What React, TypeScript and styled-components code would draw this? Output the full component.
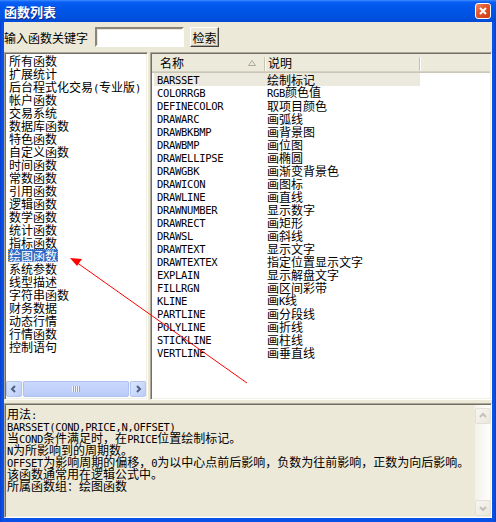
import React from 'react';
import styled, { createGlobalStyle } from 'styled-components';

const CJK = `"Noto Sans CJK SC", "Liberation Sans", sans-serif`;
const MONO = `"DejaVu Sans Mono", "Liberation Mono", monospace`;

const GlobalStyle = createGlobalStyle`
  html, body {
    margin: 0;
    padding: 0;
  }
  body {
    width: 496px;
    height: 522px;
    overflow: hidden;
    font-family: ${CJK};
    font-size: 12px;
    color: #000;
  }
`;

const groups = [
    '所有函数', '扩展统计', '后台程式化交易(专业版)', '帐户函数', '交易系统',
    '数据库函数', '特色函数', '自定义函数', '时间函数', '常数函数', '引用函数',
    '逻辑函数', '数学函数', '统计函数', '指标函数', '绘图函数', '系统参数',
    '线型描述', '字符串函数', '财务数据', '动态行情', '行情函数', '控制语句',
];

const funcs: [string, string][] = [
    ['BARSSET', '绘制标记'],
    ['COLORRGB', 'RGB颜色值'],
    ['DEFINECOLOR', '取项目颜色'],
    ['DRAWARC', '画弧线'],
    ['DRAWBKBMP', '画背景图'],
    ['DRAWBMP', '画位图'],
    ['DRAWELLIPSE', '画椭圆'],
    ['DRAWGBK', '画渐变背景色'],
    ['DRAWICON', '画图标'],
    ['DRAWLINE', '画直线'],
    ['DRAWNUMBER', '显示数字'],
    ['DRAWRECT', '画矩形'],
    ['DRAWSL', '画斜线'],
    ['DRAWTEXT', '显示文字'],
    ['DRAWTEXTEX', '指定位置显示文字'],
    ['EXPLAIN', '显示解盘文字'],
    ['FILLRGN', '画区间彩带'],
    ['KLINE', '画K线'],
    ['PARTLINE', '画分段线'],
    ['POLYLINE', '画折线'],
    ['STICKLINE', '画柱线'],
    ['VERTLINE', '画垂直线'],
];

const usage = [
    '用法:',
    'BARSSET(COND,PRICE,N,OFFSET)',
    '当COND条件满足时，在PRICE位置绘制标记。',
    'N为所影响到的周期数。',
    'OFFSET为影响周期的偏移，0为以中心点前后影响，负数为往前影响，正数为向后影响。',
    '该函数通常用在逻辑公式中。',
    '所属函数组：绘图函数',
];

const Window = styled.div`
    position: relative;
    width: 496px;
    height: 522px;
    display: flex;
    flex-direction: column;
    background: linear-gradient(90deg, #0a3fd0 0, #0850e6 2px, #0850e6 494px, #0a3fd0 496px);
`;

const TitleBar = styled.div`
    height: 22px;
    flex: none;
    display: flex;
    align-items: center;
    justify-content: space-between;
    padding: 0 5px 0 4px;
    background: linear-gradient(#3d8dff 0, #0a5ef4 2px, #0057ea 7px, #0053e2 16px, #0049d4 22px);
    color: #fff;
    font-weight: bold;
    font-size: 13px;
    text-shadow: 1px 1px #0b2a8c;
`;

const CloseButton = styled.div`
    width: 14px;
    height: 14px;
    border: 1px solid #fff;
    border-radius: 3px;
    background: linear-gradient(135deg, #f08a68 0, #e2572f 40%, #c83a14 100%);
    display: flex;
    align-items: center;
    justify-content: center;
`;

const Client = styled.div`
    flex: 1;
    margin: 0 4px 4px;
    background: #ece9d8;
    display: flex;
    flex-direction: column;
`;

const SearchRow = styled.div`
    height: 20px;
    margin: 5px 0;
    display: flex;
    align-items: center;
`;

const SearchLabel = styled.span`
    width: 91px;
    line-height: 13px;
`;

const SearchInput = styled.div`
    width: 85px;
    height: 16px;
    background: #fff;
    border: 2px solid;
    border-color: #8a877a #fff #fff #8a877a;
    box-shadow: inset 1px 1px #ece9d8;
`;

const SearchButton = styled.div`
    margin-left: 6px;
    width: 27px;
    height: 18px;
    border: 1px solid;
    border-color: #fff #404040 #404040 #fff;
    box-shadow: inset -1px -1px #aca899;
    display: flex;
    align-items: center;
    justify-content: center;
    line-height: 13px;
`;

const Panes = styled.div`
    height: 348px;
    display: flex;
    gap: 2px;
`;

const Sunken = styled.div`
    box-sizing: border-box;
    border: 1px solid;
    border-color: #aca899 #fff #fff #aca899;
    box-shadow: inset 1px 1px #716f64, inset -1px -1px #f1efe2;
    padding: 1px;
`;

const LeftPane = styled(Sunken)`
    width: 144px;
    background: #fff;
    display: flex;
    flex-direction: column;
`;

const GroupList = styled.div`
    flex: 1;
    padding-left: 2px;
`;

const GroupRow = styled.div`
    height: 13px;
    display: flex;
`;

const GroupLabel = styled.span<{ $selected?: boolean }>`
    box-sizing: border-box;
    height: 13px;
    line-height: 11px;
    padding: 1px 1px 0;
    white-space: nowrap;
    background: ${p => (p.$selected ? '#316ac5' : 'transparent')};
    color: ${p => (p.$selected ? '#fff' : '#000')};
    outline: ${p => (p.$selected ? '1px dotted #d6a040' : 'none')};
    outline-offset: -1px;
`;

const HScroll = styled.div`
    height: 16px;
    margin-bottom: 1px;
    display: flex;
    gap: 1px;
    background: linear-gradient(#eeede5, #fdfdfa);
`;

const ScrollButton = styled.div<{ $disabled?: boolean }>`
    box-sizing: border-box;
    width: 16px;
    height: 16px;
    flex: none;
    border-radius: 2px;
    border: 1px solid ${p => (p.$disabled ? '#e3e1d7' : '#b3c6f3')};
    background: ${p =>
        p.$disabled
            ? 'linear-gradient(135deg, #f7f6f1, #e9e7dc)'
            : 'linear-gradient(135deg, #dbe5fd, #bccdf7)'};
    display: flex;
    align-items: center;
    justify-content: center;
`;

const Thumb = styled.div`
    flex: 1;
    box-sizing: border-box;
    border-radius: 2px;
    border: 1px solid #aec1ef;
    background: linear-gradient(#cad8fc, #b8cbf8);
    display: flex;
    align-items: center;
    justify-content: center;
`;

const RightPane = styled(Sunken)`
    flex: 1;
    background: #fff;
    display: flex;
    flex-direction: column;
`;

const Header = styled.div`
    height: 19px;
    flex: none;
    display: grid;
    grid-template-columns: 113px 155px 1fr;
    background: #ebeadb;
    box-shadow: inset 0 -1px #cbc7b8, inset 0 -2px #d6d2c2;
`;

const HeaderCell = styled.div<{ $pad: number }>`
    display: flex;
    align-items: center;
    justify-content: space-between;
    padding: 0 8px 2px ${p => p.$pad}px;
    line-height: 12px;
    border-right: 1px solid #c7c5b2;
    box-shadow: 1px 0 #fff;
    margin: 3px 0;
    height: 12px;
    align-self: center;
`;

const FuncRow = styled.div<{ $selected?: boolean }>`
    margin-left: 2px;
    width: 266px;
    height: 13px;
    line-height: 12px;
    display: grid;
    grid-template-columns: 111px 155px;
    align-items: center;
    background: ${p => (p.$selected ? '#ece9de' : 'transparent')};
`;

const FuncName = styled.span`
    padding-left: 3px;
    font-family: ${MONO};
    font-size: 10.5px;
    letter-spacing: -0.3px;
    white-space: nowrap;
`;

const FuncDesc = styled.span`
    padding-left: 2px;
    line-height: 11px;
    white-space: nowrap;
`;

const UsageBox = styled(Sunken)`
    margin-top: 3px;
    flex: 1;
    display: flex;
`;

const UsageText = styled.div`
    flex: 1;
    padding: 3px 0 0 1px;
    white-space: nowrap;
    overflow: hidden;
`;

const UsageLine = styled.div`
    height: 12px;
    line-height: 11px;
`;

const VScroll = styled.div`
    width: 15px;
    display: flex;
    flex-direction: column;
    justify-content: space-between;
    background: linear-gradient(90deg, #f3f1ea, #fefefd);
    padding-top: 3px;
`;

const Latin = styled.span`
    font-family: ${MONO};
    font-size: 10.5px;
    letter-spacing: -0.3px;
`;

const Overlay = styled.svg`
    position: absolute;
    left: 0;
    top: 0;
    pointer-events: none;
`;

const Mixed = ({ text }: { text: string }) => (
    <>
        {text.split(/([\x20-\x7e]+)/).map((part, i) =>
            /^[\x20-\x7e]+$/.test(part) ? <Latin key={i}>{part}</Latin> : part,
        )}
    </>
);

const Chevron = ({ dir, color }: { dir: 'left' | 'right' | 'up' | 'down'; color: string }) => {
    const pts = {
        left: '6,2 3,5 6,8',
        right: '4,2 7,5 4,8',
        up: '2,6 5,3 8,6',
        down: '2,4 5,7 8,4',
    }[dir];
    return (
        <svg width="10" height="10" viewBox="0 0 10 10">
            <polyline points={pts} fill="none" stroke={color} strokeWidth="2" />
        </svg>
    );
};

const App = () => {
    return (
        <Window>
            <GlobalStyle />
            <TitleBar>
                <span>函数列表</span>
                <CloseButton>
                    <svg width="10" height="10" viewBox="0 0 10 10">
                        <path d="M2 2 L8 8 M8 2 L2 8" stroke="#fff" strokeWidth="2" />
                    </svg>
                </CloseButton>
            </TitleBar>
            <Client>
                <SearchRow>
                    <SearchLabel>输入函数关键字</SearchLabel>
                    <SearchInput />
                    <SearchButton>检索</SearchButton>
                </SearchRow>
                <Panes>
                    <LeftPane>
                        <GroupList>
                            {groups.map(g => (
                                <GroupRow key={g}>
                                    <GroupLabel $selected={g === '绘图函数'}>
                                        <Mixed text={g} />
                                    </GroupLabel>
                                </GroupRow>
                            ))}
                        </GroupList>
                        <HScroll>
                            <ScrollButton>
                                <Chevron dir="left" color="#4d6185" />
                            </ScrollButton>
                            <Thumb>
                                <svg width="8" height="6" viewBox="0 0 8 6">
                                    <path d="M0.5 0 V6 M2.5 0 V6 M4.5 0 V6 M6.5 0 V6" stroke="#eef3fe" strokeWidth="1" />
                                    <path d="M1.5 0 V6 M3.5 0 V6 M5.5 0 V6 M7.5 0 V6" stroke="#8ca6e6" strokeWidth="1" />
                                </svg>
                            </Thumb>
                            <ScrollButton>
                                <Chevron dir="right" color="#4d6185" />
                            </ScrollButton>
                        </HScroll>
                    </LeftPane>
                    <RightPane>
                        <Header>
                            <HeaderCell $pad={8}>
                                <span>名称</span>
                                <svg width="8" height="6" viewBox="0 0 8 6">
                                    <path d="M0.5 5.5 L4 0.5 L7.5 5.5 Z" fill="none" stroke="#aca899" strokeWidth="1" />
                                </svg>
                            </HeaderCell>
                            <HeaderCell $pad={3}>
                                <span>说明</span>
                            </HeaderCell>
                            <div />
                        </Header>
                        {funcs.map(([name, desc], i) => (
                            <FuncRow key={name} $selected={i === 0}>
                                <FuncName>{name}</FuncName>
                                <FuncDesc>
                                    <Mixed text={desc} />
                                </FuncDesc>
                            </FuncRow>
                        ))}
                    </RightPane>
                </Panes>
                <UsageBox>
                    <UsageText>
                        {usage.map(line => (
                            <UsageLine key={line}>
                                <Mixed text={line} />
                            </UsageLine>
                        ))}
                    </UsageText>
                    <VScroll>
                        <ScrollButton $disabled>
                            <Chevron dir="up" color="#c4c2b8" />
                        </ScrollButton>
                        <ScrollButton $disabled>
                            <Chevron dir="down" color="#c4c2b8" />
                        </ScrollButton>
                    </VScroll>
                </UsageBox>
            </Client>
            <Overlay width="496" height="522" viewBox="0 0 496 522">
                <line x1="247" y1="383" x2="76" y2="262" stroke="#ff0000" strokeWidth="1" />
                <polygon points="70,258 82,259 77,266" fill="#ff0000" />
            </Overlay>
        </Window>
    );
};

export default App;
